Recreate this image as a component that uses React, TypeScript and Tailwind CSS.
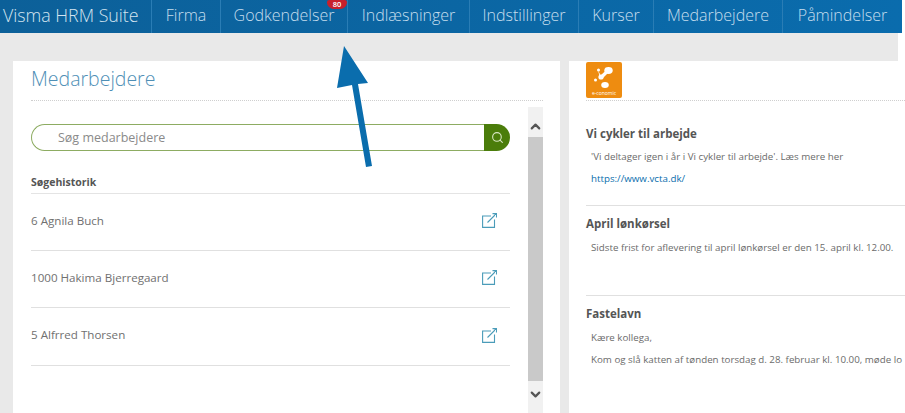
import React from "react";
import { ChevronDown, ChevronUp, Search } from "lucide-react";

const NAV = [
  { label: "Firma", width: "w-[69px]" },
  { label: "Godkendelser", width: "w-[127px]", badge: "80" },
  { label: "Indlæsninger", width: "w-[122px]" },
  { label: "Indstillinger", width: "w-[109px]" },
  { label: "Kurser", width: "w-[75px]" },
  { label: "Medarbejdere", width: "w-[129px]" },
  { label: "Påmindelser", width: "w-[119px]" },
];

const HISTORY = [
  { name: "6 Agnila Buch", height: "h-[57px]" },
  { name: "1000 Hakima Bjerregaard", height: "h-[57px]" },
  { name: "5 Alfrred Thorsen", height: "h-[58px]" },
];

const OpenIcon = () => (
  <svg width="15" height="15" viewBox="0 0 15 15" fill="none" stroke="#4b9cb9" strokeWidth="1.1">
    <path d="M9 3H.6v11.400H12.500V6.500" />
    <path d="M5.500 9.500 14 1M10.500.6h4v4" />
  </svg>
);

const Logo = () => (
  <div className="w-9 h-9 rounded-[2px] bg-[#ee8c10] flex flex-col items-center overflow-hidden">
    <svg width="36" height="28" viewBox="0 0 36 28" fill="white" className="shrink-0">
      <ellipse cx="22.500" cy="8.500" rx="4.200" ry="3.400" />
      <circle cx="15" cy="15" r="2.600" />
      <path d="M14.500 13.500 21 7.500l2 2.500-6.500 6.500z" />
      <circle cx="12.500" cy="8" r="1.500" />
      <path d="M12 8.500 15.500 15l-1.500.6z" />
      <circle cx="9.500" cy="18" r="1.500" />
      <ellipse cx="19" cy="23" rx="3.800" ry="3" />
    </svg>
    <span className="text-[5px] leading-[6px] text-white whitespace-nowrap">e-conomic</span>
  </div>
);

const App: React.FC = () => {
  return (
    <div className="relative w-[905px] h-[413px] overflow-hidden bg-white font-['Open_Sans',sans-serif]">
      {/* top menu */}
      <nav className="w-[902px] h-[33px] flex bg-linear-to-r from-[#0c6099] to-[#0a6cad] text-[#c6deee] text-[16px] font-light">
        <div className="w-[152px] pl-[3px] leading-[31px] text-[17.8px] whitespace-nowrap border-r border-[#2a7db5] text-[#d3e4f0]">
          Visma HRM Suite
        </div>
        {NAV.map((item) => (
          <div
            key={item.label}
            className={`relative ${item.width} text-center leading-[31px] whitespace-nowrap border-r border-[#2a7db5] last:border-r-0`}
          >
            {item.label}
            {item.badge && (
              <span className="absolute right-0 top-0 w-[20px] h-[9px] rounded-b-[9px] rounded-t-[3px] bg-[#c8202c] text-white text-[7.500px] leading-[8px] font-semibold">
                {item.badge}
              </span>
            )}
          </div>
        ))}
      </nav>

      <main className="w-[898px] h-[380px] bg-[#e9e9e9] pt-7 pl-[13px] flex gap-[9px]">
        {/* employees */}
        <section className="w-[547px] shrink-0 bg-white px-[18px] pr-[17px]">
          <h1 className="h-[40px] pt-[3px] leading-[30px] text-[19.500px] font-light text-[#4f8fb6] border-b border-dotted border-[#cfcfcf]">
            Medarbejdere
          </h1>
          <div className="flex justify-between pt-[6px]">
            <div className="w-[479px] pt-[17px]">
              <div className="flex h-[27px]">
                <div className="flex-1 rounded-l-full border border-r-0 border-[#8dac62] pl-[26px] text-[12.500px] leading-[25px] text-[#8a8a8a]">
                  Søg medarbejdere
                </div>
                <div className="w-[26px] rounded-r-full bg-[#4b7d0b] flex items-center justify-center">
                  <Search size={13} color="#d8e6c4" strokeWidth={2} />
                </div>
              </div>
              <div className="h-[28px] mt-[15px] pt-[2px] text-[10.500px] leading-[28px] font-bold text-[#555] border-b border-[#e4e4e4]">
                Søgehistorik
              </div>
              {HISTORY.map((row) => (
                <div
                  key={row.name}
                  className={`${row.height} flex items-center justify-between pr-[13px] pb-[3px] border-b border-[#e0e0e0] text-[11.600px] text-[#707070]`}
                >
                  <span>{row.name}</span>
                  <OpenIcon />
                </div>
              ))}
            </div>
            {/* scrollbar */}
            <div className="w-[15px] h-[306px] flex flex-col bg-[#f1f1f1]">
              <div className="h-[30px] flex justify-center pt-[12px]">
                <ChevronUp size={15} color="#555" strokeWidth={3.500} />
              </div>
              <div className="h-[244px] bg-[#c9c9c9]" />
              <div className="flex-1 flex justify-center pt-[6px]">
                <ChevronDown size={15} color="#555" strokeWidth={3.500} />
              </div>
            </div>
          </div>
        </section>

        {/* news */}
        <section className="w-[336px] shrink-0 bg-white pl-[17px] text-[#6b6b6b] whitespace-nowrap overflow-hidden">
          <div className="h-[40px] pt-px border-b border-dotted border-[#cfcfcf]">
            <Logo />
          </div>
          <div className="h-[105px] border-b border-[#e0e0e0] pt-[24px]">
            <h2 className="text-[11.500px] leading-[18px] font-bold text-[#555]">Vi cykler til arbejde</h2>
            <p className="pl-[5px] mt-[7px] text-[9.750px] leading-[14px]">
              'Vi deltager igen i år i Vi cykler til arbejde'. Læs mere her
            </p>
            <p className="pl-[5px] mt-[8px] text-[9.750px] leading-[14px] text-[#0a6ead]">https://www.vcta.dk/</p>
          </div>
          <div className="h-[90px] border-b border-[#e0e0e0] pt-[9px]">
            <h2 className="text-[11.500px] leading-[18px] font-bold text-[#555]">April lønkørsel</h2>
            <p className="pl-[5px] mt-[8px] text-[9.750px] leading-[14px]">
              Sidste frist for aflevering til april lønkørsel er den 15. april kl. 12.00.
            </p>
          </div>
          <div className="pt-[9px]">
            <h2 className="text-[11.500px] leading-[18px] font-bold text-[#555]">Fastelavn</h2>
            <p className="pl-[5px] mt-[8px] text-[9.750px] leading-[14px]">Kære kollega,</p>
            <p className="pl-[5px] mt-[8px] text-[9.750px] leading-[14px]">
              Kom og slå katten af tønden torsdag d. 28. februar kl. 10.00, møde lo
            </p>
          </div>
        </section>
      </main>

      {/* annotation arrow */}
      <svg className="absolute left-[330px] top-[40px]" width="50" height="135" viewBox="0 0 50 135">
        <path d="M14 6 7 48l15-3 14 82 6-1L28 44l10-1z" fill="#0a6dad" />
      </svg>
    </div>
  );
};

export default App;
